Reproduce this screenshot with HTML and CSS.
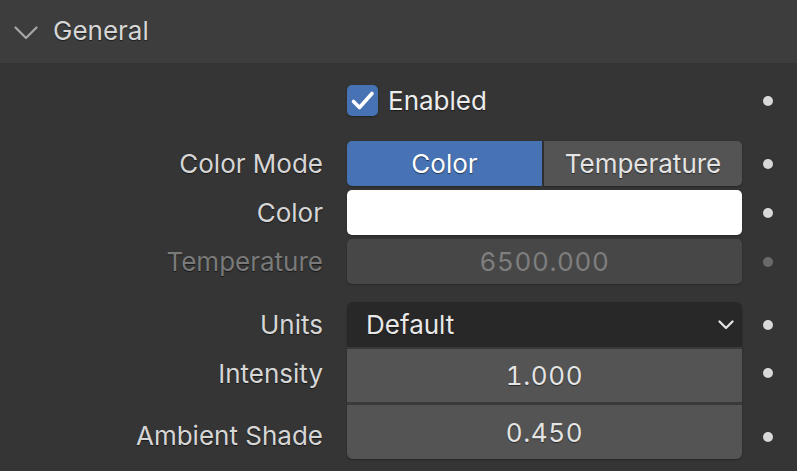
FILE: index.html
```html
<!DOCTYPE html>
<html>
<head>
<meta charset="utf-8">
<link rel="stylesheet" href="styles.css">
</head>
<body>
<div class="panel">
  <div class="header">
    <svg class="hchev" width="24" height="14" viewBox="0 0 24 14"><path d="M1.5 1.5 L12 12 L22.5 1.5" fill="none" stroke="#a8a8a8" stroke-width="2.2" stroke-linecap="round" stroke-linejoin="round"/></svg>
    <span class="title">General</span>
  </div>
  <div class="body">
    <div class="row r-enabled">
      <div class="label"></div>
      <div class="control check-wrap">
        <div class="checkbox">
          <svg width="31" height="31" viewBox="0 0 31 31"><path d="M6.5 16.5 L12.5 22.5 L25 8.5" fill="none" stroke="#ffffff" stroke-width="3.6" stroke-linecap="round" stroke-linejoin="round"/></svg>
        </div>
        <span class="check-label">Enabled</span>
      </div>
      <div class="dotcell"><span class="dot"></span></div>
    </div>

    <div class="row r-std r-mode">
      <div class="label">Color Mode</div>
      <div class="control seg">
        <div class="seg-btn active">Color</div>
        <div class="seg-btn">Temperature</div>
      </div>
      <div class="dotcell"><span class="dot"></span></div>
    </div>

    <div class="row r-std r-color">
      <div class="label">Color</div>
      <div class="control swatch"></div>
      <div class="dotcell"><span class="dot"></span></div>
    </div>

    <div class="row r-std r-temp">
      <div class="label dim">Temperature</div>
      <div class="control field disabled">6500.000</div>
      <div class="dotcell"><span class="dot dim"></span></div>
    </div>

    <div class="group">
      <div class="labels">
        <div class="label l-units">Units</div>
        <div class="label l-int">Intensity</div>
        <div class="label l-amb">Ambient Shade</div>
      </div>
      <div class="stack">
        <div class="dropdown">
          <span>Default</span>
          <svg width="16" height="10" viewBox="0 0 16 10"><path d="M1.5 1.5 L8 8 L14.5 1.5" fill="none" stroke="#e6e6e6" stroke-width="2.2" stroke-linecap="round" stroke-linejoin="round"/></svg>
        </div>
        <div class="num n-int">1.000</div>
        <div class="num n-amb">0.450</div>
      </div>
      <div class="dots">
        <div class="dotcell d-units"><span class="dot"></span></div>
        <div class="dotcell d-int"><span class="dot"></span></div>
        <div class="dotcell d-amb"><span class="dot"></span></div>
      </div>
    </div>
  </div>
</div>
</body>
</html>
```

FILE: styles.css
```css
html, body {
  margin: 0;
  padding: 0;
}
body {
  width: 797px;
  height: 471px;
  overflow: hidden;
  background: #353535;
  font-family: Inter, "Noto Sans", "DejaVu Sans", sans-serif;
  font-size: 26px;
  color: #dcdcdc;
}
.panel {
  display: flex;
  flex-direction: column;
}
.header {
  height: 63px;
  background: #3d3d3d;
  display: flex;
  align-items: center;
  padding-left: 14px;
  box-sizing: border-box;
}
.hchev {
  margin-top: 2px;
}
.title {
  margin-left: 15px;
  color: #d6d6d6;
  text-shadow: 0 1px 1px rgba(0,0,0,0.55);
  position: relative;
  top: -1px;
}
.body {
  display: flex;
  flex-direction: column;
  padding-top: 22px;
}
.row, .group {
  display: grid;
  grid-template-columns: 347px 395px 52px;
}
.row {
  align-items: center;
}
.label {
  text-align: right;
  padding-right: 24px;
  color: #d6d6d6;
  text-shadow: 0 1px 1px rgba(0,0,0,0.55);
  white-space: nowrap;
}
.label.dim {
  color: #7a7a7a;
}
.dotcell {
  display: flex;
  justify-content: center;
  align-items: center;
  width: 52px;
}
.dot {
  width: 10px;
  height: 10px;
  border-radius: 50%;
  background: #d8d8d8;
}
.dot.dim {
  background: #6a6a6a;
}
.r-enabled {
  height: 31px;
}
.check-wrap {
  display: flex;
  align-items: center;
}
.checkbox {
  width: 31px;
  height: 31px;
  border-radius: 5px;
  background: #4772b3;
  box-shadow: 0 1px 2px rgba(0,0,0,0.35);
}
.checkbox svg {
  display: block;
}
.check-label {
  margin-left: 10px;
  color: #ececec;
  text-shadow: 0 1px 1px rgba(0,0,0,0.5);
}
.r-std {
  height: 45px;
}
.r-mode {
  margin-top: 25px;
}
.r-color, .r-temp {
  margin-top: 4px;
}
.control {
  height: 100%;
  box-sizing: border-box;
}
.seg {
  display: flex;
  gap: 2px;
}
.seg-btn {
  flex: 1;
  display: flex;
  align-items: center;
  justify-content: center;
  background: #545454;
  color: #e4e4e4;
  text-shadow: 0 1px 1px rgba(0,0,0,0.5);
  border-radius: 0 5px 5px 0;
  box-shadow: 0 1px 2px rgba(0,0,0,0.3);
}
.seg-btn.active {
  flex: 0 0 195px;
  background: #4772b3;
  color: #ffffff;
  border-radius: 5px 0 0 5px;
}
.swatch {
  background: #ffffff;
  border-radius: 5px;
  box-shadow: 0 1px 2px rgba(0,0,0,0.3);
}
.field {
  display: flex;
  align-items: center;
  justify-content: center;
  border-radius: 5px;
  font-variant-numeric: tabular-nums;
  letter-spacing: 0.6px;
}
.field.disabled {
  background: #474747;
  color: #7e7e7e;
  box-shadow: 0 1px 2px rgba(0,0,0,0.25);
}
.group {
  margin-top: 18px;
}
.labels, .dots {
  display: flex;
  flex-direction: column;
}
.labels .label {
  display: flex;
  align-items: center;
  justify-content: flex-end;
}
.l-units { height: 45px; }
.l-int { height: 45px; margin-top: 4px; }
.l-amb { height: 45px; margin-top: 17px; }
.stack {
  display: flex;
  flex-direction: column;
  background: #3a3a3a;
  border-radius: 6px;
  overflow: hidden;
  box-shadow: 0 1px 2px rgba(0,0,0,0.3);
}
.dropdown {
  height: 45px;
  background: #282828;
  display: flex;
  align-items: center;
  justify-content: space-between;
  padding: 0 8px 0 19px;
  color: #e8e8e8;
  text-shadow: 0 1px 1px rgba(0,0,0,0.5);
}
.dropdown svg {
  display: block;
}
.num {
  background: #545454;
  display: flex;
  align-items: center;
  justify-content: center;
  color: #e4e4e4;
  text-shadow: 0 1px 1px rgba(0,0,0,0.5);
  font-variant-numeric: tabular-nums;
  letter-spacing: 0.6px;
}
.n-int {
  height: 53px;
  margin-top: 2px;
}
.n-amb {
  height: 54px;
  margin-top: 3px;
}
.d-units { height: 45px; }
.d-int { height: 45px; margin-top: 3px; }
.d-amb { height: 45px; margin-top: 19px; }
```
